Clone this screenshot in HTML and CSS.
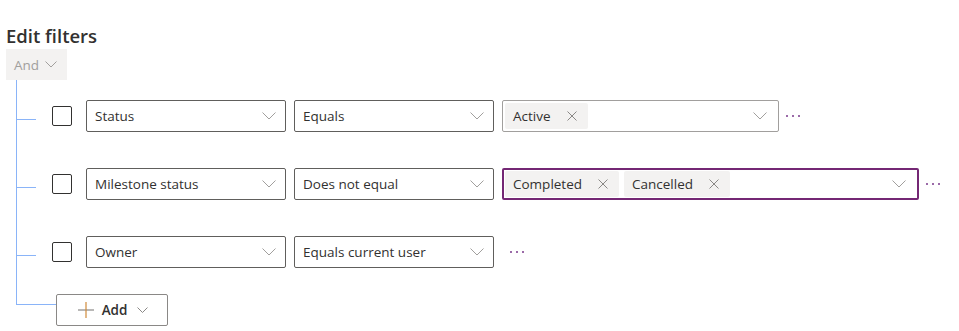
FILE: index.html
```html
<!DOCTYPE html>
<html lang="en">
<head>
    <meta charset="UTF-8">
    <title>Edit filters</title>
    <link rel="stylesheet" href="styles.css">
</head>
<body>
    <div class="panel">
        <h1 class="title">Edit filters</h1>
        <button class="group-op">And
            <svg class="chev" width="12" height="7" viewBox="0 0 12 7"><path d="M0.5 0.5 L6 6 L11.5 0.5" fill="none" stroke="currentColor" stroke-width="1"/></svg>
        </button>

        <div class="tree">
            <div class="filter-row">
                <span class="checkbox"></span>
                <div class="dropdown field">
                    <span class="dd-text">Status</span>
                    <svg class="chev" width="14" height="8" viewBox="0 0 14 8"><path d="M0.5 0.5 L7 7 L13.5 0.5" fill="none" stroke="currentColor" stroke-width="1"/></svg>
                </div>
                <div class="dropdown field">
                    <span class="dd-text">Equals</span>
                    <svg class="chev" width="14" height="8" viewBox="0 0 14 8"><path d="M0.5 0.5 L7 7 L13.5 0.5" fill="none" stroke="currentColor" stroke-width="1"/></svg>
                </div>
                <div class="value-box" style="width: 277px">
                    <span class="chip">Active
                        <svg class="chip-x" width="10" height="10" viewBox="0 0 10 10"><path d="M0.5 0.5 L9.5 9.5 M9.5 0.5 L0.5 9.5" stroke="currentColor" stroke-width="1"/></svg>
                    </span>
                    <svg class="chev" width="14" height="8" viewBox="0 0 14 8"><path d="M0.5 0.5 L7 7 L13.5 0.5" fill="none" stroke="currentColor" stroke-width="1"/></svg>
                </div>
                <span class="more"><i></i><i></i><i></i></span>
            </div>

            <div class="filter-row">
                <span class="checkbox"></span>
                <div class="dropdown field">
                    <span class="dd-text">Milestone status</span>
                    <svg class="chev" width="14" height="8" viewBox="0 0 14 8"><path d="M0.5 0.5 L7 7 L13.5 0.5" fill="none" stroke="currentColor" stroke-width="1"/></svg>
                </div>
                <div class="dropdown field">
                    <span class="dd-text">Does not equal</span>
                    <svg class="chev" width="14" height="8" viewBox="0 0 14 8"><path d="M0.5 0.5 L7 7 L13.5 0.5" fill="none" stroke="currentColor" stroke-width="1"/></svg>
                </div>
                <div class="value-box focused" style="width: 417px">
                    <span class="chip">Completed
                        <svg class="chip-x" width="10" height="10" viewBox="0 0 10 10"><path d="M0.5 0.5 L9.5 9.5 M9.5 0.5 L0.5 9.5" stroke="currentColor" stroke-width="1"/></svg>
                    </span>
                    <span class="chip">Cancelled
                        <svg class="chip-x" width="10" height="10" viewBox="0 0 10 10"><path d="M0.5 0.5 L9.5 9.5 M9.5 0.5 L0.5 9.5" stroke="currentColor" stroke-width="1"/></svg>
                    </span>
                    <svg class="chev" width="14" height="8" viewBox="0 0 14 8"><path d="M0.5 0.5 L7 7 L13.5 0.5" fill="none" stroke="currentColor" stroke-width="1"/></svg>
                </div>
                <span class="more"><i></i><i></i><i></i></span>
            </div>

            <div class="filter-row">
                <span class="checkbox"></span>
                <div class="dropdown field">
                    <span class="dd-text">Owner</span>
                    <svg class="chev" width="14" height="8" viewBox="0 0 14 8"><path d="M0.5 0.5 L7 7 L13.5 0.5" fill="none" stroke="currentColor" stroke-width="1"/></svg>
                </div>
                <div class="dropdown field">
                    <span class="dd-text">Equals current user</span>
                    <svg class="chev" width="14" height="8" viewBox="0 0 14 8"><path d="M0.5 0.5 L7 7 L13.5 0.5" fill="none" stroke="currentColor" stroke-width="1"/></svg>
                </div>
                <span class="more wide"><i></i><i></i><i></i></span>
            </div>

            <div class="add-row">
                <button class="add-btn">
                    <svg width="16" height="16" viewBox="0 0 16 16">
                        <path d="M0 8 H16" stroke="#8a8886" stroke-width="1.2"/>
                        <path d="M8 0 V16" stroke="#d08a3a" stroke-width="1.2"/>
                    </svg>
                    <span>Add</span>
                    <svg class="chev" width="11" height="6" viewBox="0 0 11 6"><path d="M0.5 0.5 L5.5 5.5 L10.5 0.5" fill="none" stroke="currentColor" stroke-width="1"/></svg>
                </button>
            </div>
        </div>
    </div>
</body>
</html>
```

FILE: styles.css
```css
body {
    margin: 0;
    font-family: "Open Sans", "Noto Sans", sans-serif;
    background: #ffffff;
    color: #323130;
}
.panel {
    padding: 24px 0 0 6px;
}
.title {
    margin: 0;
    font-size: 18.5px;
    font-weight: 600;
    line-height: 24px;
    color: #323130;
}
.group-op {
    display: flex;
    align-items: center;
    gap: 6px;
    height: 31px;
    width: 61px;
    margin-top: 1px;
    padding: 0 0 0 8px;
    border: none;
    background: #f3f2f1;
    color: #a19f9d;
    font-family: inherit;
    font-size: 13.5px;
}
.group-op .chev {
    color: #a19f9d;
}
.tree {
    position: relative;
    margin-left: 10px;
    padding-top: 20px;
}
.tree::before {
    content: "";
    position: absolute;
    left: 0;
    top: 0;
    bottom: 21px;
    width: 1px;
    background: #8ab4f8;
}
.filter-row {
    position: relative;
    display: flex;
    align-items: center;
    height: 32px;
    padding-left: 36px;
    margin-bottom: 36px;
}
.filter-row::before {
    content: "";
    position: absolute;
    left: 0;
    top: 19px;
    width: 20px;
    height: 1px;
    background: #8ab4f8;
}
.checkbox {
    width: 18px;
    height: 18px;
    border: 1px solid #323130;
    border-radius: 2px;
    margin-right: 14px;
    flex-shrink: 0;
}
.dropdown {
    display: flex;
    align-items: center;
    justify-content: space-between;
    box-sizing: border-box;
    width: 200px;
    height: 32px;
    padding: 0 9px 0 8px;
    border: 1px solid #605e5c;
    border-radius: 2px;
    margin-right: 8px;
    font-size: 13.5px;
}
.chev {
    color: #a19f9d;
    display: block;
}
.value-box {
    display: flex;
    align-items: center;
    gap: 5px;
    box-sizing: border-box;
    height: 32px;
    padding: 0 11px 0 2px;
    border: 1px solid #a19f9d;
    border-radius: 2px;
    font-size: 13.5px;
}
.value-box .chev {
    margin-left: auto;
}
.value-box.focused {
    border: 2px solid #742774;
    padding-left: 1px;
}
.chip {
    display: flex;
    align-items: center;
    height: 26px;
    padding: 0 11px 0 8px;
    background: #f3f2f1;
    border-radius: 2px;
    white-space: nowrap;
}
.chip-x {
    margin-left: 16px;
    color: #8a8886;
}
.more {
    display: flex;
    gap: 4px;
    margin-left: 7px;
}
.more.wide {
    margin-left: 8px;
}
.more i {
    width: 2px;
    height: 2px;
    background: #9b6aa8;
}
.add-row {
    position: relative;
    padding-left: 40px;
    margin-top: -10px;
}
.add-row::before {
    content: "";
    position: absolute;
    left: 0;
    top: 10px;
    width: 40px;
    height: 1px;
    background: #8ab4f8;
}
.add-btn {
    display: flex;
    align-items: center;
    justify-content: center;
    gap: 8px;
    width: 112px;
    height: 32px;
    border: 1px solid #8a8886;
    border-radius: 2px;
    background: #ffffff;
    color: #323130;
    font-family: inherit;
    font-size: 13.5px;
    font-weight: 600;
    padding: 0 10px 0 12px;
}
.add-btn .chev {
    color: #8a8886;
    margin-left: 2px;
}
```
